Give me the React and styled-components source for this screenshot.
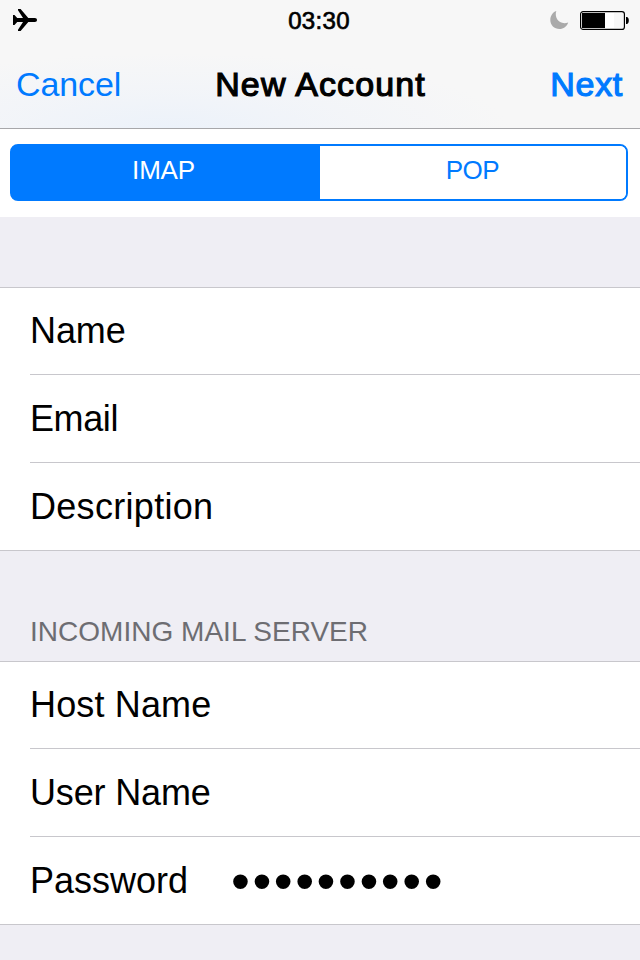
import React from "react";
import styled, { createGlobalStyle } from "styled-components";

const GlobalStyle = createGlobalStyle`
  * { box-sizing: border-box; }
  body { margin: 0; background: #efeef4; }
`;

const Screen = styled.main`
  width: 640px;
  height: 960px;
  overflow: hidden;
  display: flex;
  flex-direction: column;
  background: #efeef4;
  color: #000;
  font-family: "Liberation Sans", Arial, sans-serif;
`;

const Header = styled.header`
  height: 129px;
  border-bottom: 1px solid #a7a7aa;
  background:
    radial-gradient(ellipse 340px 75px at 170px 128px, #ecf2fa 0%, rgba(241, 244, 249, 0.75) 50%, rgba(247, 247, 247, 0) 100%),
    #f7f7f7;
`;

const StatusBar = styled.div`
  height: 40px;
  padding: 0 11px 0 12px;
  display: grid;
  grid-template-columns: 1fr auto 1fr;
  grid-template-rows: 40px;
  align-items: center;
`;

const Time = styled.time`
  font-size: 24px;
  line-height: 38px;
  padding: 2px 3px 0 0;
  letter-spacing: 0.3px;
  -webkit-text-stroke: 0.7px currentColor;
`;

const StatusIcons = styled.div`
  display: flex;
  align-items: center;
  justify-content: flex-end;
  gap: 11px;
`;

const NavBar = styled.nav`
  height: 88px;
  padding: 0 17px 0 16px;
  display: grid;
  grid-template-columns: 1fr auto 1fr;
  align-items: center;
`;

const NavButton = styled.button`
  border: 0;
  padding: 0;
  background: none;
  color: #007aff;
  font: 34px/88px "Liberation Sans", Arial, sans-serif;
  letter-spacing: ${(p) => p.$spacing}px;
  text-align: ${(p) => p.$align};
  -webkit-text-stroke: ${(p) => (p.$strong ? "1.2px" : "0")} currentColor;
`;

const Title = styled.h1`
  margin: 0;
  padding-left: 2px;
  font-size: 34px;
  font-weight: 400;
  line-height: 88px;
  letter-spacing: 1.1px;
  -webkit-text-stroke: 1.2px currentColor;
`;

const SegmentArea = styled.div`
  height: 88px;
  padding: 15px 12px 16px 10px;
  background: #fff;
`;

const Segments = styled.div`
  height: 57px;
  display: grid;
  grid-template-columns: 308px 1fr;
  border: 2px solid #007aff;
  border-radius: 8px;
  background: linear-gradient(to right, #007aff 50%, #fff 50%);
  overflow: hidden;
`;

const Segment = styled.button`
  border: 0;
  padding: 0 ${(p) => (p.$active ? 5 : 1)}px 4px 0;
  background: ${(p) => (p.$active ? "#007aff" : "#fff")};
  color: ${(p) => (p.$active ? "#fff" : "#007aff")};
  font: 26px/49px "Liberation Sans", Arial, sans-serif;
  letter-spacing: ${(p) => p.$spacing}px;
`;

const GroupHeading = styled.h2`
  margin: 0;
  height: ${(p) => p.$height}px;
  padding: 0 30px 12px;
  display: flex;
  align-items: flex-end;
  color: #6d6d72;
  font-size: 28px;
  font-weight: 400;
  line-height: 34px;
  letter-spacing: 0.02px;
`;

const Group = styled.section`
  background: #fff;
  border-top: 1px solid #c8c7cc;
  border-bottom: 1px solid #c8c7cc;
`;

const Row = styled.div`
  height: ${(p) => (p.$last || p.$first ? 87 : 88)}px;
  margin-left: 30px;
  display: flex;
  align-items: center;
  border-bottom: ${(p) => (p.$last ? 0 : 1)}px solid #c8c7cc;
`;

const Label = styled.span`
  width: 201px;
  font-size: 36px;
  line-height: 86px;
  white-space: nowrap;
  letter-spacing: ${(p) => p.$spacing}px;
`;

const Secret = styled.span`
  font-size: 54px;
  line-height: 86px;
  letter-spacing: 2.5px;
`;

function Airplane() {
  return (
    <svg width="26" height="24" viewBox="0 0 26 24" aria-label="Airplane mode">
      <path d="M1 7h1.5l2.7 3H11L6 2.3V1h2.6l7.7 9h6.6c1.3 0 2.1.9 2.1 2s-.8 2-2.1 2h-6.6l-7.7 9H6v-1.3L11 14H5.2l-2.7 3H1Z" />
    </svg>
  );
}

function Moon() {
  return (
    <svg width="19" height="20" viewBox="0 0 19 20" aria-label="Do not disturb">
      <path fill="#aaa" d="M6.3 1C4 7.5 9.3 15.5 18.2 12.5C16.9 16.5 13.5 19 9.5 19C4.2 19 .3 15 .3 10C.3 5.8 2.7 2.3 6.3 1Z" />
    </svg>
  );
}

function Battery() {
  return (
    <svg width="49" height="20" viewBox="0 0 49 20" aria-label="Battery">
      <rect x=".6" y="1.6" width="43.8" height="17.8" rx="2.5" fill="#fff" stroke="#000" strokeWidth="1.2" />
      <path d="M2 3h23v15H2z" />
      <path fill="#f7f7f7" d="M34 3h9v15h-9z" />
      <path d="M46 7h1c1.2.5 1.8 1.8 1.8 3.5s-.6 3-1.8 3.5h-1Z" />
    </svg>
  );
}

const accountFields = [
  { label: "Name", spacing: -0.1 },
  { label: "Email", spacing: -0.4 },
  { label: "Description", spacing: 0.3 },
];
const serverFields = [
  { label: "Host Name", spacing: 0.15 },
  { label: "User Name", spacing: -0.15 },
  { label: "Password", spacing: 0, value: "••••••••••" },
];

function FieldGroup({ fields }) {
  return (
    <Group>
      {fields.map((f, i) => (
        <Row key={f.label} $first={i === 0} $last={i === fields.length - 1}>
          <Label $spacing={f.spacing}>{f.label}</Label>
          {f.value && <Secret>{f.value}</Secret>}
        </Row>
      ))}
    </Group>
  );
}

export default function App() {
  return (
    <Screen>
      <GlobalStyle />
      <Header>
        <StatusBar>
          <Airplane />
          <Time>03:30</Time>
          <StatusIcons><Moon /><Battery /></StatusIcons>
        </StatusBar>
        <NavBar>
          <NavButton $align="left" $spacing={-0.1}>Cancel</NavButton>
          <Title>New Account</Title>
          <NavButton $align="right" $spacing={0.7} $strong>Next</NavButton>
        </NavBar>
      </Header>
      <SegmentArea>
        <Segments>
          <Segment $active $spacing={-0.2}>IMAP</Segment>
          <Segment $spacing={-0.5}>POP</Segment>
        </Segments>
      </SegmentArea>
      <GroupHeading as="div" $height={70} />
      <FieldGroup fields={accountFields} />
      <GroupHeading $height={110}>INCOMING MAIL SERVER</GroupHeading>
      <FieldGroup fields={serverFields} />
    </Screen>
  );
}
